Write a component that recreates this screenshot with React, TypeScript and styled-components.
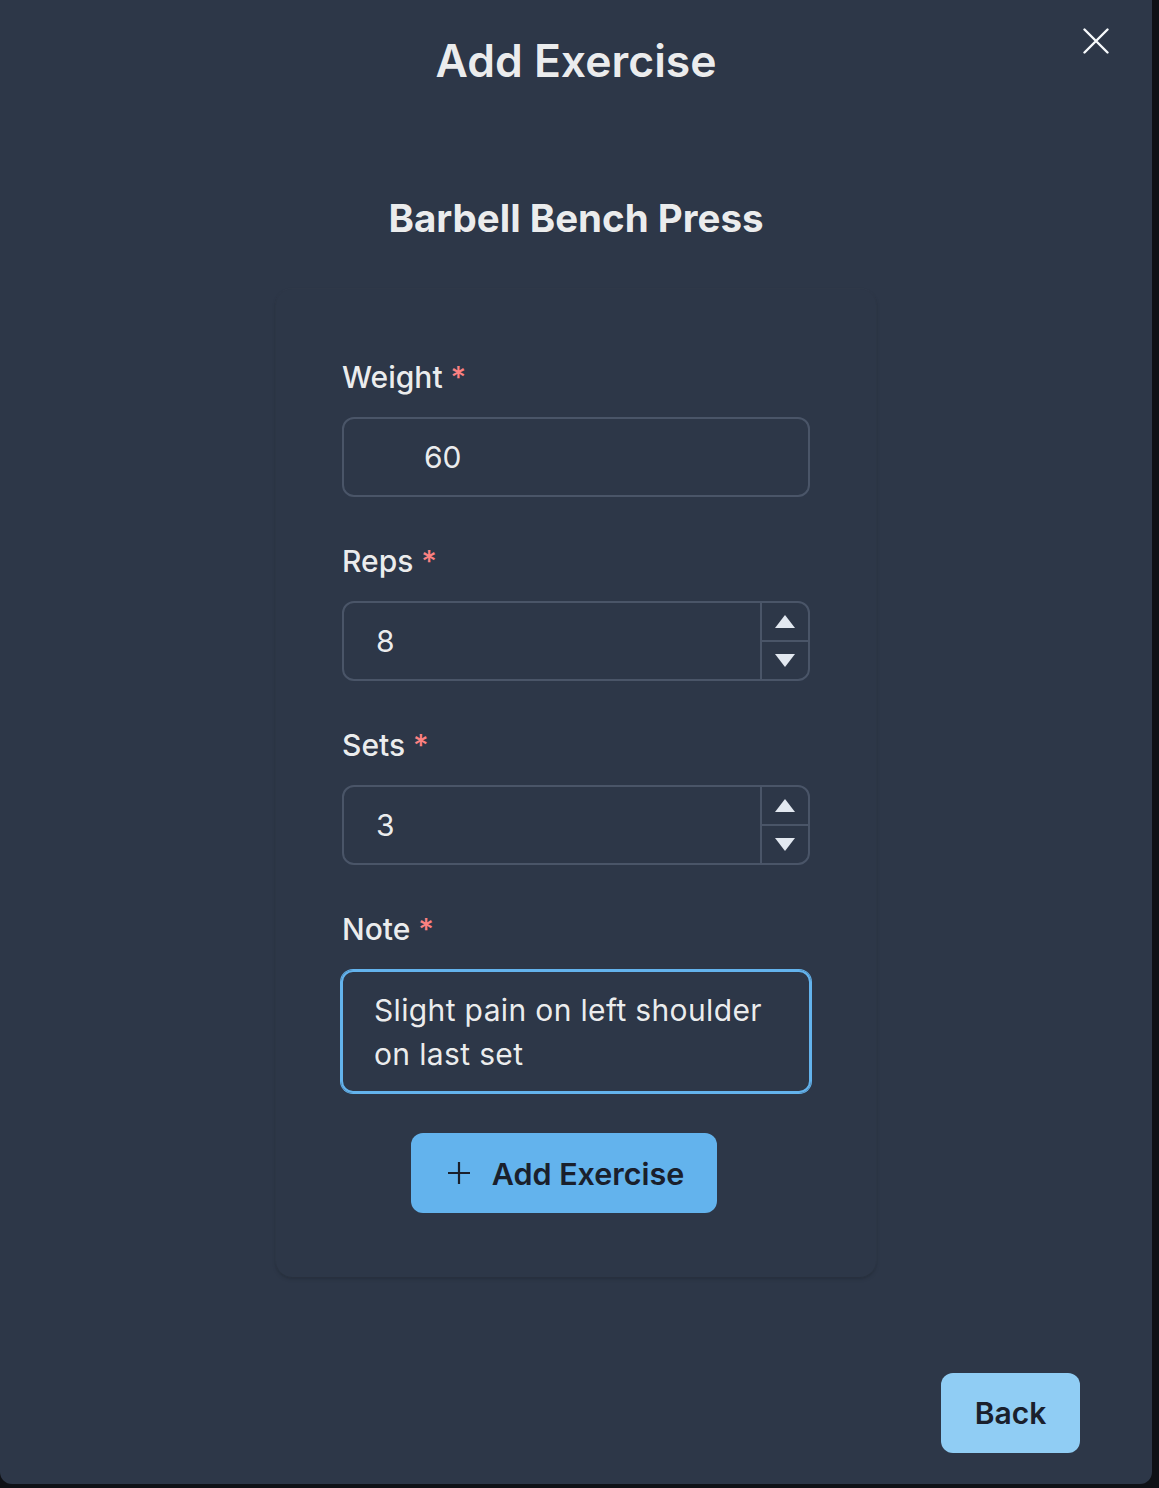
import React from "react";
import styled, { createGlobalStyle } from "styled-components";

const Global = createGlobalStyle`
  html, body { margin: 0; padding: 0; background: #0f1116; }
  body { font-family: Inter, "Noto Sans", "Liberation Sans", sans-serif; -webkit-font-smoothing: antialiased; }
  * { box-sizing: border-box; }
`;

const Page = styled.div`
  width: 1159px;
  height: 1488px;
  background: #0f1116;
`;

const Modal = styled.section`
  position: relative;
  width: 1152px;
  height: 1484px;
  background: #2d3748;
  border-radius: 0 0 12px 12px;
  color: rgba(255, 255, 255, 0.92);
  display: flex;
  flex-direction: column;
  align-items: center;
`;

const Title = styled.h2`
  margin: 35px 0 0;
  font-size: 44.5px;
  line-height: 52px;
  font-weight: 600;
  text-align: center;
`;

const CloseButton = styled.button`
  position: absolute;
  top: 21px;
  right: 36px;
  width: 40px;
  height: 40px;
  padding: 0;
  border: none;
  background: transparent;
  color: #f7fafc;
  display: flex;
  align-items: center;
  justify-content: center;
  cursor: pointer;
`;

const Subtitle = styled.h3`
  margin: 108px 0 0;
  font-size: 38.5px;
  line-height: 46px;
  font-weight: 700;
  text-align: center;
`;

const Card = styled.div`
  margin-top: 48px;
  width: 600px;
  padding: 66px 66px 64px;
  border-radius: 16px;
  background: #2d3748;
  box-shadow: 0 0 0 1px rgba(255, 255, 255, 0.02), 0 2px 4px rgba(0, 0, 0, 0.14),
    0 1px 2px rgba(0, 0, 0, 0.1);
  display: flex;
  flex-direction: column;
`;

const Field = styled.div<{ $last?: boolean }>`
  display: flex;
  flex-direction: column;
  margin-bottom: ${(p) => (p.$last ? "40px" : "42px")};
`;

const Label = styled.label`
  font-size: 30px;
  line-height: 45px;
  font-weight: 500;
  margin-bottom: 17px;
`;

const Star = styled.span`
  color: #fc8181;
  margin-left: 8px;
`;

const InputBox = styled.div`
  position: relative;
  height: 80px;
  border: 2px solid #4a5568;
  border-radius: 12px;
  display: flex;
  align-items: stretch;
`;

const TextInput = styled.input<{ $indent?: number }>`
  flex: 1;
  min-width: 0;
  border: none;
  outline: none;
  background: transparent;
  color: rgba(255, 255, 255, 0.92);
  font-family: inherit;
  font-size: 30px;
  padding: 0 0 0 ${(p) => p.$indent ?? 32}px;
`;

const Stepper = styled.div`
  width: 48px;
  border-left: 2px solid #4a5568;
  display: flex;
  flex-direction: column;
`;

const StepBtn = styled.div<{ $top?: boolean }>`
  flex: 1;
  display: flex;
  align-items: center;
  justify-content: center;
  color: #e2e8f0;
  border-bottom: ${(p) => (p.$top ? "2px solid #4a5568" : "none")};
`;

const TextArea = styled.textarea`
  width: calc(100% + 2px);
  height: 123px;
  margin: 1px -1px 0;
  border: 2px solid #63b3ed;
  box-shadow: 0 0 0 1px #63b3ed;
  border-radius: 12px;
  background: transparent;
  color: rgba(255, 255, 255, 0.92);
  font-family: inherit;
  font-size: 30px;
  letter-spacing: 0.35px;
  line-height: 44px;
  padding: 16px 31px;
  resize: none;
  outline: none;
  overflow: hidden;
`;

const ButtonRow = styled.div`
  display: flex;
  justify-content: center;
  padding-right: 24px;
`;

const PrimaryButton = styled.button`
  height: 80px;
  padding: 0 33px 0 36px;
  border: none;
  border-radius: 12px;
  background: #63b3ed;
  color: #1a202c;
  font-family: inherit;
  font-size: 30.5px;
  font-weight: 600;
  display: flex;
  align-items: center;
  gap: 21px;
  cursor: pointer;
`;

const Footer = styled.div`
  margin-top: auto;
  align-self: stretch;
  display: flex;
  justify-content: flex-end;
  padding: 0 72px 31px;
`;

const BackButton = styled.button`
  width: 139px;
  height: 80px;
  border: none;
  border-radius: 12px;
  background: #90cdf4;
  color: #1a202c;
  font-family: inherit;
  font-size: 30px;
  font-weight: 600;
  cursor: pointer;
`;

const Up = () => (
  <svg width="20" height="14" viewBox="0 0 20 14">
    <polygon points="10,0 20,13 0,13" fill="currentColor" />
  </svg>
);
const Down = () => (
  <svg width="20" height="14" viewBox="0 0 20 14">
    <polygon points="0,0 20,0 10,13" fill="currentColor" />
  </svg>
);

const NumberField = ({ label, value }: { label: string; value: string }) => (
  <Field>
    <Label>
      {label}
      <Star>*</Star>
    </Label>
    <InputBox>
      <TextInput readOnly defaultValue={value} $indent={32} />
      <Stepper>
        <StepBtn $top>
          <Up />
        </StepBtn>
        <StepBtn>
          <Down />
        </StepBtn>
      </Stepper>
    </InputBox>
  </Field>
);

export default function App() {
  return (
    <Page>
      <Global />
      <Modal>
        <Title>Add Exercise</Title>
        <CloseButton aria-label="Close">
          <svg width="26" height="26" viewBox="0 0 26 26" fill="none">
            <path d="M1.5 1.5L24.5 24.5M24.5 1.5L1.5 24.5" stroke="currentColor" strokeWidth="2.4" strokeLinecap="round" />
          </svg>
        </CloseButton>
        <Subtitle>Barbell Bench Press</Subtitle>
        <Card>
          <Field>
            <Label>
              Weight<Star>*</Star>
            </Label>
            <InputBox>
              <TextInput readOnly defaultValue="60" $indent={80} />
            </InputBox>
          </Field>
          <NumberField label="Reps" value="8" />
          <NumberField label="Sets" value="3" />
          <Field $last>
            <Label>
              Note<Star>*</Star>
            </Label>
            <TextArea readOnly defaultValue="Slight pain on left shoulder on last set" />
          </Field>
          <ButtonRow>
            <PrimaryButton>
              <svg width="24" height="24" viewBox="0 0 24 24" fill="none">
                <path d="M12 1V23M1 12H23" stroke="currentColor" strokeWidth="2.2" />
              </svg>
              Add Exercise
            </PrimaryButton>
          </ButtonRow>
        </Card>
        <Footer>
          <BackButton>Back</BackButton>
        </Footer>
      </Modal>
    </Page>
  );
}
